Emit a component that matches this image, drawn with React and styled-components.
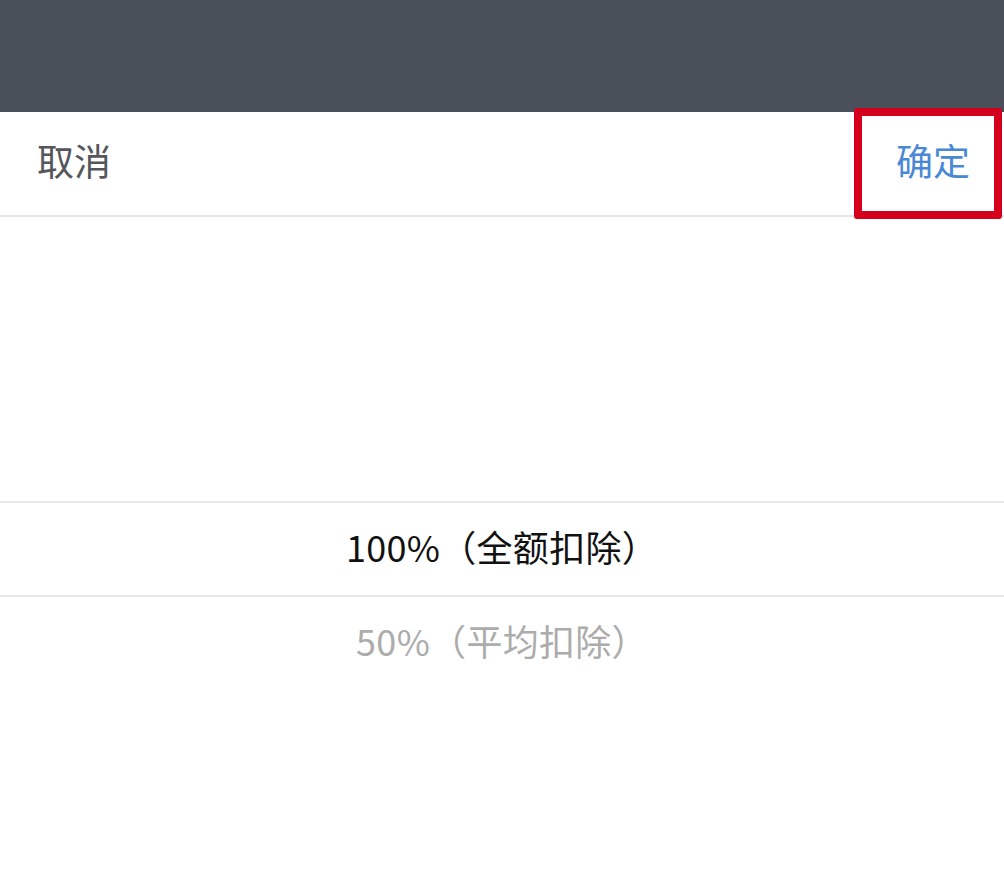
import React from "react";
import styled, { createGlobalStyle } from "styled-components";

const GlobalStyle = createGlobalStyle`
  html, body {
    margin: 0;
    padding: 0;
    background: #ffffff;
    font-family: "Noto Sans CJK SC", "Noto Sans", sans-serif;
  }
`;

const Screen = styled.div`
  position: relative;
  width: 1004px;
  height: 878px;
  overflow: hidden;
  background: #fff;
`;

const TopBar = styled.div`
  height: 112px;
  background: #4a5059;
`;

const Toolbar = styled.div`
  height: 103px;
  display: flex;
  justify-content: space-between;
  align-items: center;
  border-bottom: 2px solid #e6e6e6;
  .action {
    font-size: 37px;
    line-height: 1;
    padding-bottom: 6px;
  }
  .cancel {
    color: #55575c;
    padding-left: 37px;
  }
  .confirm {
    color: #4a88d6;
    padding-right: 34px;
  }
`;

const Highlight = styled.div`
  position: absolute;
  left: 854px;
  top: 108px;
  width: 132px;
  height: 95px;
  border: 8px solid #d4001c;
  border-radius: 3px;
`;

const Picker = styled.div`
  padding-top: 284px;
`;

const Option = styled.div`
  height: 86px;
  padding-bottom: 6px;
  display: flex;
  align-items: center;
  justify-content: center;
  font-size: 36px;
  letter-spacing: 0.3px;
  color: ${(props) => (props.$active ? "#111" : "#acacac")};
  border-top: ${(props) => (props.$active ? "2px solid #e8e8e8" : "none")};
  border-bottom: ${(props) => (props.$active ? "2px solid #e8e8e8" : "none")};
`;

const options = ["100%（全额扣除）", "50%（平均扣除）"];

const App = () => {
  return (
    <Screen>
      <GlobalStyle />
      <TopBar />
      <Toolbar>
        <span className="action cancel">取消</span>
        <span className="action confirm">确定</span>
      </Toolbar>
      <Picker>
        {options.map((label, i) => (
          <Option key={label} $active={i === 0}>
            {label}
          </Option>
        ))}
      </Picker>
      <Highlight />
    </Screen>
  );
};

export default App;
